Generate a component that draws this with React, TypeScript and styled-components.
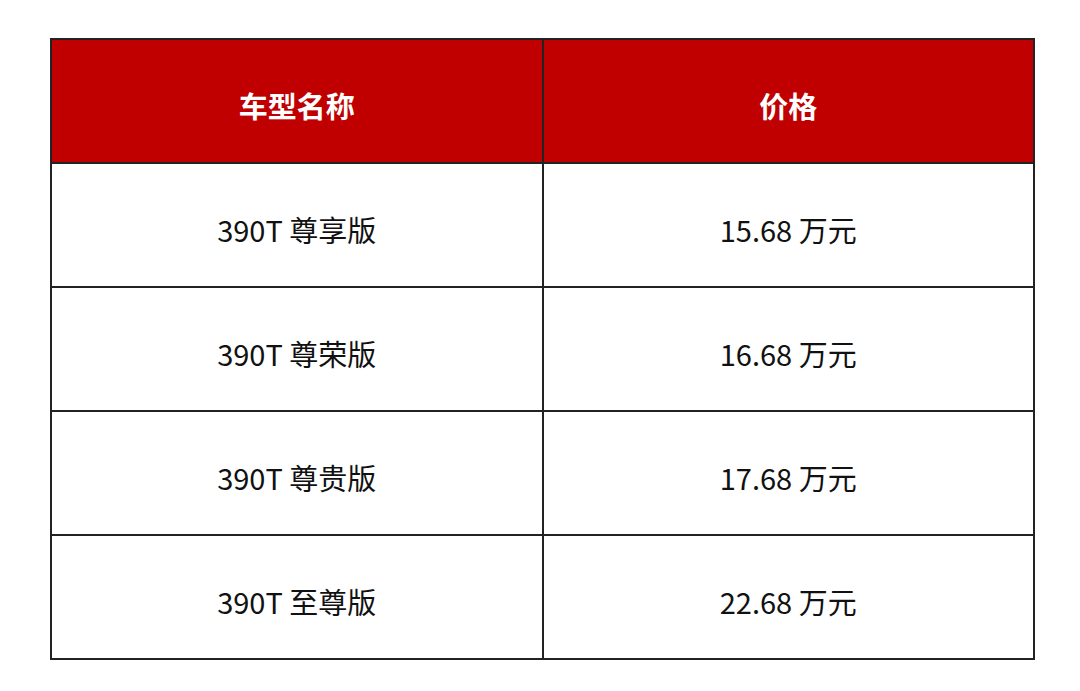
import React from 'react'
import styled, { createGlobalStyle } from 'styled-components'

const GlobalStyle = createGlobalStyle`
  html, body {
    margin: 0;
    padding: 0;
    background: #ffffff;
  }
  body {
    font-family: 'Noto Sans CJK SC', 'Noto Sans', sans-serif;
  }
`

const Page = styled.div`
  width: 1080px;
  height: 691px;
  padding: 38px 0 0 50px;
  box-sizing: border-box;
`

const PriceTable = styled.table`
  width: 985px;
  border-collapse: collapse;
  table-layout: fixed;
`

const HeadCell = styled.th`
  height: 114px;
  padding: 8px 0 0;
  background-color: #c00000;
  border: 2px solid #222222;
  color: #ffffff;
  font-size: 29px;
  font-weight: 700;
  text-align: center;
  vertical-align: middle;
`

const Cell = styled.td`
  height: 114px;
  padding: 8px 0 0;
  border: 2px solid #222222;
  color: #111111;
  font-size: 29px;
  font-weight: 400;
  text-align: center;
  vertical-align: middle;
`

const rows = [
  { name: '390T 尊享版', price: '15.68 万元' },
  { name: '390T 尊荣版', price: '16.68 万元' },
  { name: '390T 尊贵版', price: '17.68 万元' },
  { name: '390T 至尊版', price: '22.68 万元' },
]

export default function App() {
  return (
    <>
      <GlobalStyle />
      <Page>
        <PriceTable>
          <thead>
            <tr>
              <HeadCell>车型名称</HeadCell>
              <HeadCell>价格</HeadCell>
            </tr>
          </thead>
          <tbody>
            {rows.map((row) => (
              <tr key={row.name}>
                <Cell>{row.name}</Cell>
                <Cell>{row.price}</Cell>
              </tr>
            ))}
          </tbody>
        </PriceTable>
      </Page>
    </>
  )
}
